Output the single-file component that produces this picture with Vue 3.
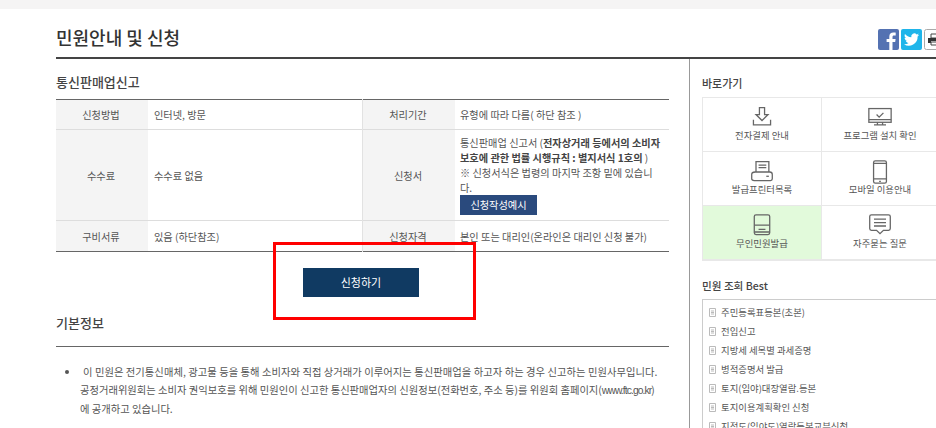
<template>
  <div class="page">
    <div class="top-strip"></div>
    <div class="wrap">
      <header class="head">
        <h1>민원안내 및 신청</h1>
        <div class="share">
          <svg class="share-icon" viewBox="0 0 21 21">
            <rect width="21" height="21" rx="2" fill="#5472b2" />
            <path d="M14.5 21v-8h2.700l.4-3.100h-3.100V8c0-.9.3-1.500 1.600-1.500h1.600V3.700c-.3 0-1.300-.1-2.400-.1-2.400 0-4 1.400-4 4.100v2.200H8.600V13h2.700v8z" fill="#fff" />
          </svg>
          <svg class="share-icon" viewBox="0 0 21 21">
            <rect width="21" height="21" rx="2" fill="#1fb5ea" />
            <path d="M18 5.800c-.6.300-1.200.4-1.800.5.600-.4 1.100-1 1.400-1.700-.6.400-1.300.6-2 .8a3.100 3.100 0 0 0-5.300 2.800C7.800 8.100 5.500 6.900 4 5c-.8 1.400-.4 3.200 1 4.100-.5 0-1-.2-1.400-.4 0 1.500 1.100 2.800 2.500 3.100-.5.100-1 .1-1.400 0 .4 1.200 1.500 2.100 2.900 2.100A6.300 6.300 0 0 1 3 15.200a8.800 8.800 0 0 0 13.600-7.800c.6-.4 1-.9 1.400-1.600z" fill="#fff" />
          </svg>
          <svg class="share-icon print" viewBox="0 0 21 21">
            <rect x=".5" y=".5" width="20" height="20" rx="2" fill="#fff" stroke="#aaa" />
            <path d="M7 5h8v4H7z" fill="none" stroke="#444" />
            <path d="M4 9h14v5h-3v-2H7v2H4z" fill="#333" />
            <path d="M7 13h8v3H7z" fill="none" stroke="#444" />
          </svg>
        </div>
      </header>

      <div class="columns">
        <main class="left">
          <h2 class="sub-title">통신판매업신고</h2>
          <table class="info">
            <tbody>
              <tr class="row-short">
                <th>신청방법</th>
                <td>인터넷, 방문</td>
                <th>처리기간</th>
                <td>유형에 따라 다름( 하단 참조 )</td>
              </tr>
              <tr>
                <th>수수료</th>
                <td>수수료 없음</td>
                <th>신청서</th>
                <td class="form-cell">
                  통신판매업 신고서 (<b>전자상거래 등에서의 소비자보호에 관한 법률 시행규칙 : 별지서식 1호의</b> )<br />
                  ※ 신청서식은 법령의 마지막 조항 밑에 있습니다.
                  <a class="sample-btn">신청작성예시</a>
                </td>
              </tr>
              <tr class="row-last">
                <th>구비서류</th>
                <td>있음 (하단참조)</td>
                <th>신청자격</th>
                <td>본인 또는 대리인(온라인은 대리인 신청 불가)</td>
              </tr>
            </tbody>
          </table>

          <div class="apply">
            <a class="apply-btn">신청하기</a>
            <div class="highlight"></div>
          </div>

          <h2 class="basic-title">기본정보</h2>
          <ul class="desc">
            <li>
              <span class="first-line">이 민원은 전기통신매체, 광고물 등을 통해 소비자와 직접 상거래가 이루어지는 통신판매업을 하고자 하는 경우 신고하는 민원사무입니다.</span><br />
              공정거래위원회는 소비자 권익보호를 위해 민원인이 신고한 통신판매업자의 신원정보(전화번호, 주소 등)를 위원회 홈페이지(<span class="url">www.ftc.go.kr</span>)<br />
              에 공개하고 있습니다.
            </li>
          </ul>
        </main>

        <aside class="right">
          <h3 class="side-title">바로가기</h3>
          <div class="quick">
            <a v-for="item in quickLinks" :key="item.label" class="quick-item" :class="{ active: item.active }">
              <svg class="quick-icon" viewBox="0 0 32 28" fill="none" stroke="#666" stroke-width="1.5">
                <g v-if="item.icon === 'download'">
                  <path d="M13 2h6v8h4l-7 7-7-7h4z" />
                  <path d="M6 16v6h20v-6M9 22h14" />
                </g>
                <g v-else-if="item.icon === 'monitor'">
                  <rect x="3" y="3" width="26" height="16" />
                  <path d="M12 10l3 3 5-5M3 16h26M13 19v3M19 19v3M9 22h14" />
                </g>
                <g v-else-if="item.icon === 'printer'">
                  <path d="M9 14V2h15v12M12 6h9M12 9h9" />
                  <path d="M8 14h17c2 0 3 1 3 3v5c0 1-1 2-2 2H7c-2 0-3-1-3-2v-5c0-2 2-3 4-3z" />
                  <path d="M21 19h3" />
                </g>
                <g v-else-if="item.icon === 'mobile'">
                  <rect x="8.500" y="1" width="15" height="26" rx="2" />
                  <path d="M8.500 4h15M8.500 22h15M15 25h2" />
                </g>
                <g v-else-if="item.icon === 'kiosk'">
                  <rect x="7" y="1" width="18" height="23" rx="2" />
                  <path d="M7 13h18M12 18h8M7 21h18" />
                </g>
                <g v-else>
                  <path d="M6 1h20c1 0 2 1 2 2v14c0 1-1 2-2 2h-6l-4 4-4-4H6c-1 0-2-1-2-2V3c0-1 1-2 2-2z" />
                  <path d="M9 6h14M9 10h14M9 14h14" />
                </g>
              </svg>
              <span class="quick-label">{{ item.label }}</span>
            </a>
          </div>

          <h3 class="side-title best-title">민원 조회 Best</h3>
          <ul class="best">
            <li v-for="name in bestList" :key="name">
              <svg class="doc-icon" viewBox="0 0 7 9" fill="none" stroke="#bbb">
                <path d="M.5.500h6v8h-6zM2 3h3M2 4.500h3M2 6h3" />
              </svg>
              {{ name }}
            </li>
          </ul>
        </aside>
      </div>
    </div>
  </div>
</template>

<script setup>
const quickLinks = [
  { label: '전자결제 안내', icon: 'download' },
  { label: '프로그램 설치 확인', icon: 'monitor' },
  { label: '발급프린터목록', icon: 'printer' },
  { label: '모바일 이용안내', icon: 'mobile' },
  { label: '무인민원발급', icon: 'kiosk', active: true },
  { label: '자주묻는 질문', icon: 'chat' },
]

const bestList = [
  '주민등록표등본(초본)',
  '전입신고',
  '지방세 세목별 과세증명',
  '병적증명서 발급',
  '토지(임야)대장열람.등본',
  '토지이용계획확인 신청',
  '지적도(임야도)열람등본교부신청',
]
</script>

<style>
html,
body {
  margin: 0;
  overflow: hidden;
  background: #fff;
}
</style>

<style scoped>
.page {
  width: 936px;
  height: 428px;
  overflow: hidden;
  font-family: 'Noto Sans CJK KR', 'Liberation Sans', sans-serif;
  font-size: 10.2px;
  color: #555;
}

.top-strip {
  height: 9px;
  background: #f5f4f4;
}

.wrap {
  width: 1000px;
  padding-left: 56px;
}

.head {
  height: 40px;
  padding-top: 8px;
  display: flex;
  align-items: center;
  border-bottom: 2px solid #444;
}

.head h1 {
  flex: none;
  width: 822px;
  margin: 0;
  font-size: 18px;
  font-weight: 500;
  line-height: 24px;
  color: #333;
}

.share {
  display: flex;
  gap: 2px;
  margin-top: 5px;
}

.share-icon {
  width: 21px;
  height: 21px;
  flex: none;
}

.columns {
  display: flex;
}

.left {
  width: 613px;
  padding-right: 20px;
  border-right: 1px solid #999;
  height: 400px;
}

.sub-title {
  margin: 14px 0 8px;
  font-size: 13px;
  line-height: 18px;
  font-weight: 500;
  color: #444;
}

.info {
  width: 613px;
  table-layout: fixed;
  border-collapse: collapse;
  border-top: 1px solid #666;
  border-bottom: 1px solid #666;
}

.info th,
.info td {
  border-top: 1px solid #ddd;
  padding: 0 6px;
  line-height: 15px;
  font-weight: 400;
  text-align: left;
}

.info tr:first-child th,
.info tr:first-child td {
  border-top: 0;
}

.info th {
  width: 80px;
  padding: 0 7px 0 5px;
  background: #f4f4f4;
  text-align: center;
  border-left: 1px solid #e2e2e2;
}

.info th:first-child {
  border-left: 0;
}

.info td:nth-child(2) {
  width: 202px;
}

.info td:nth-child(4) {
  padding-left: 5px;
}

.row-short {
  height: 30px;
}

.row-last {
  height: 31px;
}

.form-cell {
  height: 91px;
  box-sizing: border-box;
  vertical-align: top;
  padding-top: 5px !important;
}

.form-cell b {
  font-weight: 700;
  color: #444;
}

.sample-btn {
  display: block;
  width: 77px;
  height: 20px;
  background: #2a4a7d;
  color: #fff;
  text-align: center;
  line-height: 20px;
}

.apply {
  position: relative;
  padding: 16px 0 0 247px;
  height: 46px;
}

.apply-btn {
  display: block;
  width: 116px;
  height: 29px;
  background: #103a62;
  color: #fff;
  font-size: 11px;
  line-height: 29px;
  text-align: center;
}

.highlight {
  position: absolute;
  left: 217px;
  top: -10px;
  width: 197px;
  height: 72px;
  border: 3px solid #f00;
}

.basic-title {
  margin: 0;
  padding: 0 0 14px;
  font-size: 13px;
  line-height: 18px;
  font-weight: 500;
  color: #444;
  border-bottom: 1px solid #666;
}

.desc {
  margin: 16px 0 0;
  padding: 0 0 0 24px;
  list-style: disc;
  line-height: 18px;
  font-size: 10.3px;
  white-space: nowrap;
}

.first-line {
  margin-left: 3px;
  letter-spacing: 0.05px;
}

.url {
  font-family: 'Liberation Sans', sans-serif;
  letter-spacing: -0.9px;
}

.right {
  width: 260px;
  padding-left: 12px;
  flex: none;
}

.side-title {
  margin: 15px 0 5px;
  font-size: 11px;
  line-height: 18px;
  font-weight: 500;
  color: #444;
}

.quick {
  width: 236px;
  display: grid;
  grid-template-columns: 118px 117px;
  grid-template-rows: 53px 54px 54px;
  border: 1px solid #e8e8e8;
  border-bottom-width: 2px;
  font-size: 9.4px;
}

.quick-item {
  display: flex;
  flex-direction: column;
  align-items: center;
  padding-top: 8px;
  border-left: 1px solid #e8e8e8;
  border-top: 1px solid #e8e8e8;
  line-height: 14px;
}

.quick-item:nth-child(odd) {
  border-left: 0;
}

.quick-item:nth-child(-n + 2) {
  border-top: 0;
}

.quick-item.active {
  background: #e2fadb;
}

.quick-icon {
  width: 28px;
  height: 24px;
  flex: none;
}

.quick-label {
  margin-top: -2px;
}

.best-title {
  margin-top: 16px;
  margin-bottom: 4px;
  font-size: 10.6px;
}

.best {
  margin: 0;
  padding: 3px 0 0 6px;
  width: 240px;
  list-style: none;
  border: 1px solid #ccc;
  line-height: 19px;
  font-size: 9.4px;
}

.best li {
  display: flex;
  align-items: center;
  gap: 5px;
}

.doc-icon {
  width: 7px;
  height: 9px;
  flex: none;
}
</style>
